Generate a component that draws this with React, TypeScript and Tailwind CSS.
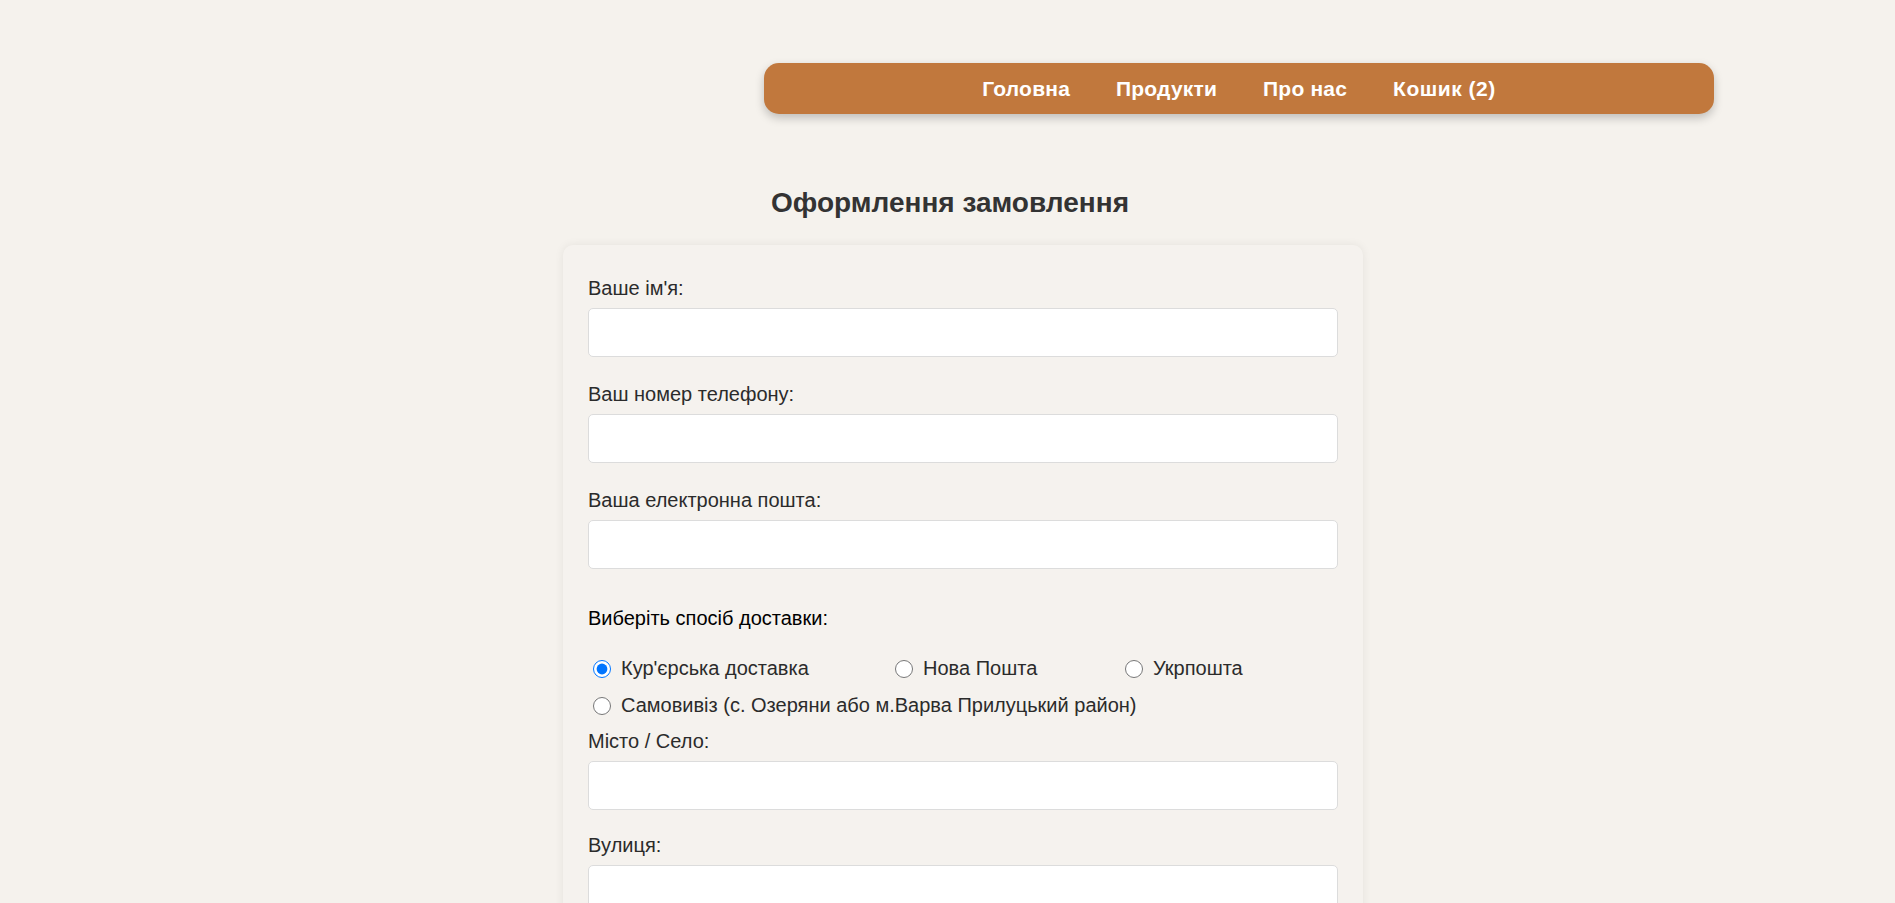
import React from "react";

const font = { fontFamily: '"Liberation Sans", Arial, sans-serif' };

function Field({ label, mt = "", mb = "mb-[26px]" }: { label: string; mt?: string; mb?: string }) {
  return (
    <div className={`${mb} ${mt}`}>
      <label className="block text-[20px] leading-[23px] text-[#2b2b2b] mb-[8px]">{label}</label>
      <input type="text" className="block w-full h-[49px] bg-white border border-[#dcdcdc] rounded-[5px] outline-none" />
    </div>
  );
}

function Radio({ label, checked = false, w }: { label: string; checked?: boolean; w: string }) {
  return (
    <label className={`flex items-center h-[37px] ${w} text-[20px] leading-[23px] text-[#2b2b2b]`}>
      <input
        type="radio"
        name="delivery"
        defaultChecked={checked}
        className="w-[18px] h-[18px] m-0 ml-[5px] mr-[10px] accent-[#0075ff]"
      />
      <span className="whitespace-nowrap">{label}</span>
    </label>
  );
}

export default function App() {
  return (
    <div className="min-h-screen w-full bg-[#f5f2ed] pb-[40px]" style={font}>
      <header className="flex justify-end pr-[181px] pt-[63px]">
        <nav className="w-[950px] h-[51px] rounded-[15px] bg-[#c1783d] shadow-[0_4px_10px_rgba(0,0,0,0.22)] flex items-center justify-center gap-[46px]">
          <a className="text-white font-bold text-[21px] leading-[24px] tracking-[0.2px]">Головна</a>
          <a className="text-white font-bold text-[21px] leading-[24px] tracking-[0.2px]">Продукти</a>
          <a className="text-white font-bold text-[21px] leading-[24px] tracking-[0.2px]">Про нас</a>
          <a className="text-white font-bold text-[21px] leading-[24px] tracking-[0.5px]">Кошик (2)</a>
        </nav>
      </header>

      <h1 className="mt-[73px] text-center pl-[5px] text-[28px] leading-[32px] font-bold text-[#333333]">
        Оформлення замовлення
      </h1>

      <div className="ml-[563px] mt-[26px] w-[800px] bg-[#f5f2ee] rounded-[10px] shadow-[0_0_10px_rgba(0,0,0,0.07)] pt-[32px] px-[25px] pb-[60px]">
        <Field label="Ваше ім'я:" />
        <Field label="Ваш номер телефону:" />
        <Field label="Ваша електронна пошта:" mb="mb-0" />

        <div className="mt-[38px] text-[20px] leading-[23px] text-black">Виберіть спосіб доставки:</div>

        <div className="mt-[20px] flex flex-wrap">
          <Radio label="Кур'єрська доставка" checked w="w-[302px]" />
          <Radio label="Нова Пошта" w="w-[230px]" />
          <Radio label="Укрпошта" w="w-auto" />
          <Radio label="Самовивіз (с. Озеряни або м.Варва Прилуцький район)" w="w-auto" />
        </div>

        <Field label="Місто / Село:" mt="mt-[6px]" mb="mb-[24px]" />
        <Field label="Вулиця:" mb="mb-0" />
      </div>
    </div>
  );
}
